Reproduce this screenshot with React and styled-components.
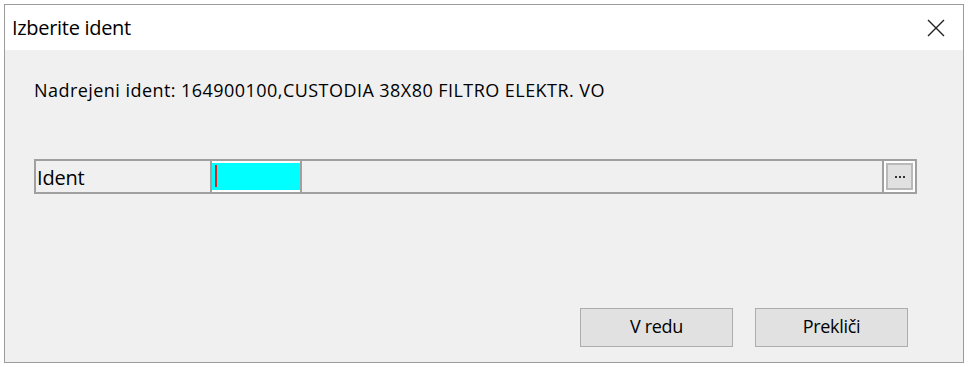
import React from "react";
import styled, { createGlobalStyle } from "styled-components";

const GlobalStyle = createGlobalStyle`
  html, body {
    margin: 0;
    padding: 0;
    background: #ffffff;
  }
  * {
    box-sizing: border-box;
  }
`;

const Window = styled.div`
  width: 960px;
  height: 359px;
  margin: 4px 0 0 4px;
  border: 1px solid #9c9c9c;
  background: #f0f0f0;
  display: flex;
  flex-direction: column;
  font-family: "Open Sans", "Noto Sans", sans-serif;
  color: #000;
`;

const TitleBar = styled.div`
  height: 45px;
  background: #ffffff;
  display: flex;
  align-items: center;
  justify-content: space-between;
  padding: 0 18px 0 7px;
  font-size: 20px;
`;

const Title = styled.span`
  letter-spacing: -0.3px;
`;

const Body = styled.div`
  flex: 1;
  display: flex;
  flex-direction: column;
  padding: 28px 46px 0 29px;
`;

const Message = styled.div`
  font-size: 18px;
  height: 24px;
  line-height: 24px;
  letter-spacing: 0.45px;
`;

const FieldRow = styled.div`
  margin-top: 57px;
  height: 35px;
  display: flex;
  border: 2px solid #a0a0a0;
  background: #f0f0f0;
`;

const Label = styled.div`
  width: 176px;
  display: flex;
  align-items: center;
  padding: 2px 0 0 1px;
  font-size: 20px;
  letter-spacing: -0.2px;
  border-right: 2px solid #a0a0a0;
`;

const InputCell = styled.div`
  width: 90px;
  padding: 2px 0;
  border-right: 2px solid #a0a0a0;
  background: #ffffff;
`;

const Cyan = styled.div`
  height: 100%;
  background: #00ffff;
  padding: 2px 0 0 3px;
`;

const Caret = styled.div`
  width: 2px;
  height: 22px;
  background: #e02020;
`;

const Filler = styled.div`
  flex: 1;
  border-right: 2px solid #a0a0a0;
`;

const EllipsisButton = styled.div`
  width: 31px;
  border: 2px solid #ffffff;
  display: flex;
`;

const EllipsisFace = styled.div`
  flex: 1;
  border: 2px solid #b9b9b9;
  background: #e1e1e1;
  display: flex;
  align-items: center;
  justify-content: center;
  gap: 2px;
`;

const Dot = styled.span`
  width: 2px;
  height: 2px;
  background: #333;
`;

const Actions = styled.div`
  margin-top: auto;
  margin-bottom: 15px;
  padding-right: 9px;
  display: flex;
  justify-content: flex-end;
  gap: 22px;
`;

const Button = styled.button`
  width: 153px;
  height: 39px;
  border: 1px solid #adadad;
  background: #e1e1e1;
  font-family: "Open Sans", "Noto Sans", sans-serif;
  font-size: 18px;
  letter-spacing: -0.3px;
  color: #000;
  padding: 0 0 3px;
`;

const CloseIcon = () => (
  <svg width="18" height="18" viewBox="0 0 18 18">
    <path d="M1 1 L17 17 M17 1 L1 17" stroke="#222" strokeWidth="1.4" fill="none" />
  </svg>
);

const App = () => {
  return (
    <>
      <GlobalStyle />
      <Window>
        <TitleBar>
          <Title>Izberite ident</Title>
          <CloseIcon />
        </TitleBar>
        <Body>
          <Message>Nadrejeni ident: 164900100,CUSTODIA 38X80 FILTRO ELEKTR. VO</Message>
          <FieldRow>
            <Label>Ident</Label>
            <InputCell>
              <Cyan>
                <Caret />
              </Cyan>
            </InputCell>
            <Filler />
            <EllipsisButton>
              <EllipsisFace>
                <Dot />
                <Dot />
                <Dot />
              </EllipsisFace>
            </EllipsisButton>
          </FieldRow>
          <Actions>
            <Button>V redu</Button>
            <Button>Prekliči</Button>
          </Actions>
        </Body>
      </Window>
    </>
  );
};

export default App;
